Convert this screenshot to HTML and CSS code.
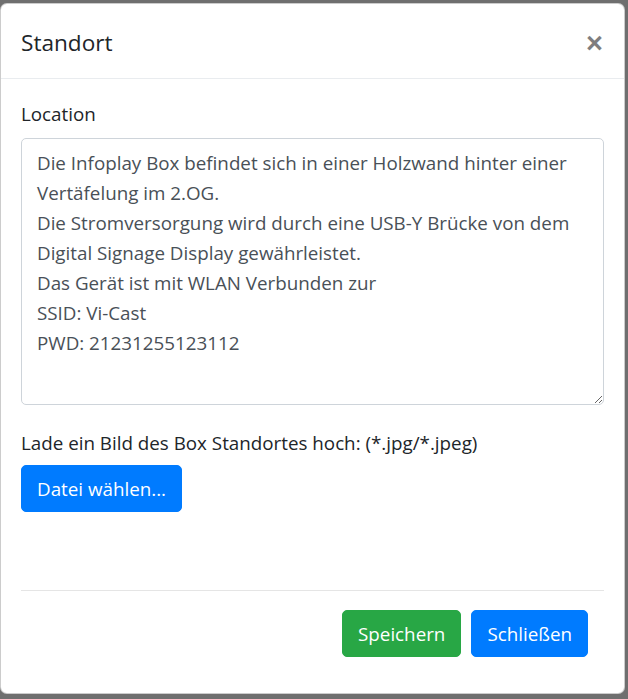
FILE: index.html
```html
<!DOCTYPE html>
<html lang="de">
<head>
<meta charset="utf-8">
<title>Standort</title>
<link rel="stylesheet" href="styles.css">
</head>
<body>
<div class="modal">
  <div class="modal-header">
    <h5 class="modal-title">Standort</h5>
    <button class="close" type="button" aria-label="Close">&times;</button>
  </div>
  <div class="modal-body">
    <label class="label" for="loc">Location</label>
    <textarea id="loc" class="textarea">Die Infoplay Box befindet sich in einer Holzwand hinter einer Vertäfelung im 2.OG.
Die Stromversorgung wird durch eine USB-Y Brücke von dem Digital Signage Display gewährleistet.
Das Gerät ist mit WLAN Verbunden zur
SSID: Vi-Cast
PWD: 21231255123112</textarea>
    <div class="label upload-label">Lade ein Bild des Box Standortes hoch: (*.jpg/*.jpeg)</div>
    <button class="btn btn-primary" type="button">Datei wählen...</button>
    <hr class="divider">
    <div class="actions">
      <button class="btn btn-success" type="button">Speichern</button>
      <button class="btn btn-primary" type="button">Schließen</button>
    </div>
  </div>
</div>
</body>
</html>
```

FILE: styles.css
```css
html, body {
  margin: 0;
  height: 100%;
}
body {
  background: #6f6f6f;
  padding: 3px 0 0 0;
  box-sizing: border-box;
  font-family: "Open Sans", "Noto Sans", sans-serif;
  font-size: 18.8px;
  line-height: 30px;
  color: #212529;
}
.modal {
  width: 625px;
  height: 691px;
  box-sizing: border-box;
  background: #fff;
  border: 1px solid rgba(0,0,0,.2);
  border-radius: 7px;
  display: flex;
  flex-direction: column;
}
.modal-header {
  display: flex;
  align-items: center;
  justify-content: space-between;
  padding: 20px 20px 17px 20px;
  border-bottom: 1px solid #e9ecef;
}
.modal-title {
  margin: 0;
  font-size: 22.6px;
  font-weight: 400;
  line-height: 37px;
}
.close {
  border: 0;
  background: transparent;
  padding: 0;
  font-family: "Liberation Sans", sans-serif;
  font-size: 29px;
  font-weight: 700;
  line-height: 30px;
  color: #000;
  opacity: .5;
  text-shadow: 0 1px 0 #fff;
  margin-right: 1px;
  cursor: pointer;
}
.modal-body {
  padding: 20px;
  display: flex;
  flex-direction: column;
  align-items: flex-start;
}
.label {
  display: block;
  margin-bottom: 9px;
}
.textarea {
  display: block;
  width: 100%;
  height: 267px;
  box-sizing: border-box;
  padding: 9px 15px 5px 15px;
  border: 1px solid #ced4da;
  border-radius: 5px;
  font: inherit;
  color: #495057;
  resize: vertical;
  margin: 0 0 23px 0;
}
.upload-label {
  margin-bottom: 7px;
}
.btn {
  font: inherit;
  color: #fff;
  border: 1px solid transparent;
  border-radius: 5px;
  padding: 7.5px 15px;
  line-height: 30px;
  cursor: pointer;
}
.btn-primary {
  background: #007bff;
  border-color: #007bff;
}
.btn-success {
  background: #28a745;
  border-color: #28a745;
}
.divider {
  align-self: stretch;
  border: 0;
  border-top: 1px solid rgba(0,0,0,.1);
  margin: 78px 0 19px 0;
}
.actions {
  align-self: stretch;
  display: flex;
  justify-content: flex-end;
  gap: 10px;
  padding-right: 16px;
}
```
